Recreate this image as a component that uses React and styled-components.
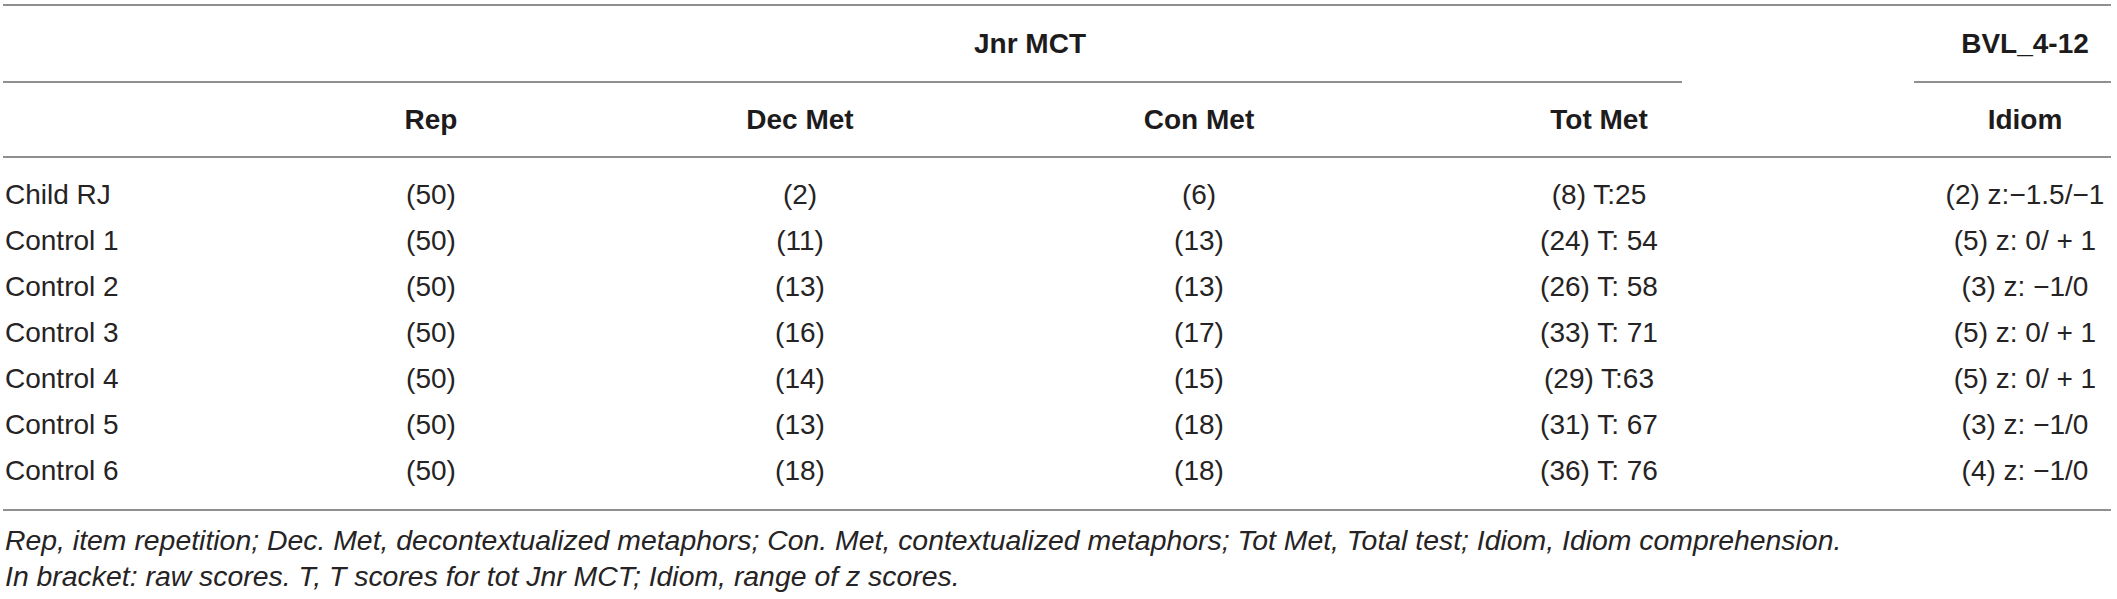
import React from 'react'
import styled, { createGlobalStyle } from 'styled-components'

const GlobalStyle = createGlobalStyle`
  html, body {
    margin: 0;
    background: #fff;
  }
  body {
    font-family: 'Liberation Sans', Arial, sans-serif;
    color: #262324;
  }
`

const rule = '2px solid #8f8f8f'
const columns = '243px 370px 368px 430px 370px 130px 197px'

const Page = styled.div`
  width: 2108px;
  padding: 4px 6px 0 3px;
`

const Table = styled.div`
  display: flex;
  flex-direction: column;
  border-top: ${rule};
`

const GroupRow = styled.div`
  display: grid;
  grid-template-columns: 375px 1304px 232px 197px;
  height: 77px;
`

const GroupCell = styled.div`
  display: flex;
  align-items: center;
  justify-content: center;
  padding-left: ${p => p.$shift || 0}px;
  border-bottom: ${p => (p.$ruled ? rule : '2px solid transparent')};
  font-size: 28px;
  font-weight: bold;
  color: #1d1b1c;
`

const HeadRow = styled.div`
  display: grid;
  grid-template-columns: ${columns};
  height: 73px;
  border-bottom: ${rule};
`

const HeadCell = styled.div`
  display: flex;
  align-items: center;
  justify-content: center;
  padding-left: ${p => p.$shift || 0}px;
  font-size: 28px;
  font-weight: bold;
  color: #1d1b1c;
`

const Body = styled.div`
  padding: 14px 0 15px;
  border-bottom: ${rule};
`

const Row = styled.div`
  display: grid;
  grid-template-columns: ${columns};
  height: 46px;
  align-items: center;
  font-size: 28px;
`

const Stub = styled.div`
  padding-left: 2px;
  white-space: nowrap;
`

const Cell = styled.div`
  text-align: center;
  white-space: nowrap;
  padding-left: ${p => p.$shift || 0}px;
`

const Notes = styled.div`
  padding: 11px 0 0 2px;
  font-size: 28.4px;
  font-style: italic;
  line-height: 36px;
`

const rows = [
  ['Child RJ', '(50)', '(2)', '(6)', '(8) T:25', '(2) z:\u22121.5/\u22121'],
  ['Control 1', '(50)', '(11)', '(13)', '(24) T: 54', '(5) z: 0/ + 1'],
  ['Control 2', '(50)', '(13)', '(13)', '(26) T: 58', '(3) z: \u22121/0'],
  ['Control 3', '(50)', '(16)', '(17)', '(33) T: 71', '(5) z: 0/ + 1'],
  ['Control 4', '(50)', '(14)', '(15)', '(29) T:63', '(5) z: 0/ + 1'],
  ['Control 5', '(50)', '(13)', '(18)', '(31) T: 67', '(3) z: \u22121/0'],
  ['Control 6', '(50)', '(18)', '(18)', '(36) T: 76', '(4) z: \u22121/0']
]

export default function App () {
  return (
    <Page>
      <GlobalStyle />
      <Table>
        <GroupRow>
          <GroupCell $ruled />
          <GroupCell $ruled>Jnr MCT</GroupCell>
          <GroupCell />
          <GroupCell $ruled $shift={25}>BVL_4-12</GroupCell>
        </GroupRow>
        <HeadRow>
          <HeadCell />
          <HeadCell>Rep</HeadCell>
          <HeadCell>Dec Met</HeadCell>
          <HeadCell>Con Met</HeadCell>
          <HeadCell>Tot Met</HeadCell>
          <HeadCell />
          <HeadCell $shift={25}>Idiom</HeadCell>
        </HeadRow>
        <Body>
          {rows.map(([name, rep, dec, con, tot, idiom]) => (
            <Row key={name}>
              <Stub>{name}</Stub>
              <Cell>{rep}</Cell>
              <Cell>{dec}</Cell>
              <Cell>{con}</Cell>
              <Cell>{tot}</Cell>
              <Cell />
              <Cell $shift={25}>{idiom}</Cell>
            </Row>
          ))}
        </Body>
      </Table>
      <Notes>
        <div>Rep, item repetition; Dec. Met, decontextualized metaphors; Con. Met, contextualized metaphors; Tot Met, Total test; Idiom, Idiom comprehension.</div>
        <div>In bracket: raw scores. T, T scores for tot Jnr MCT; Idiom, range of z scores.</div>
      </Notes>
    </Page>
  )
}
